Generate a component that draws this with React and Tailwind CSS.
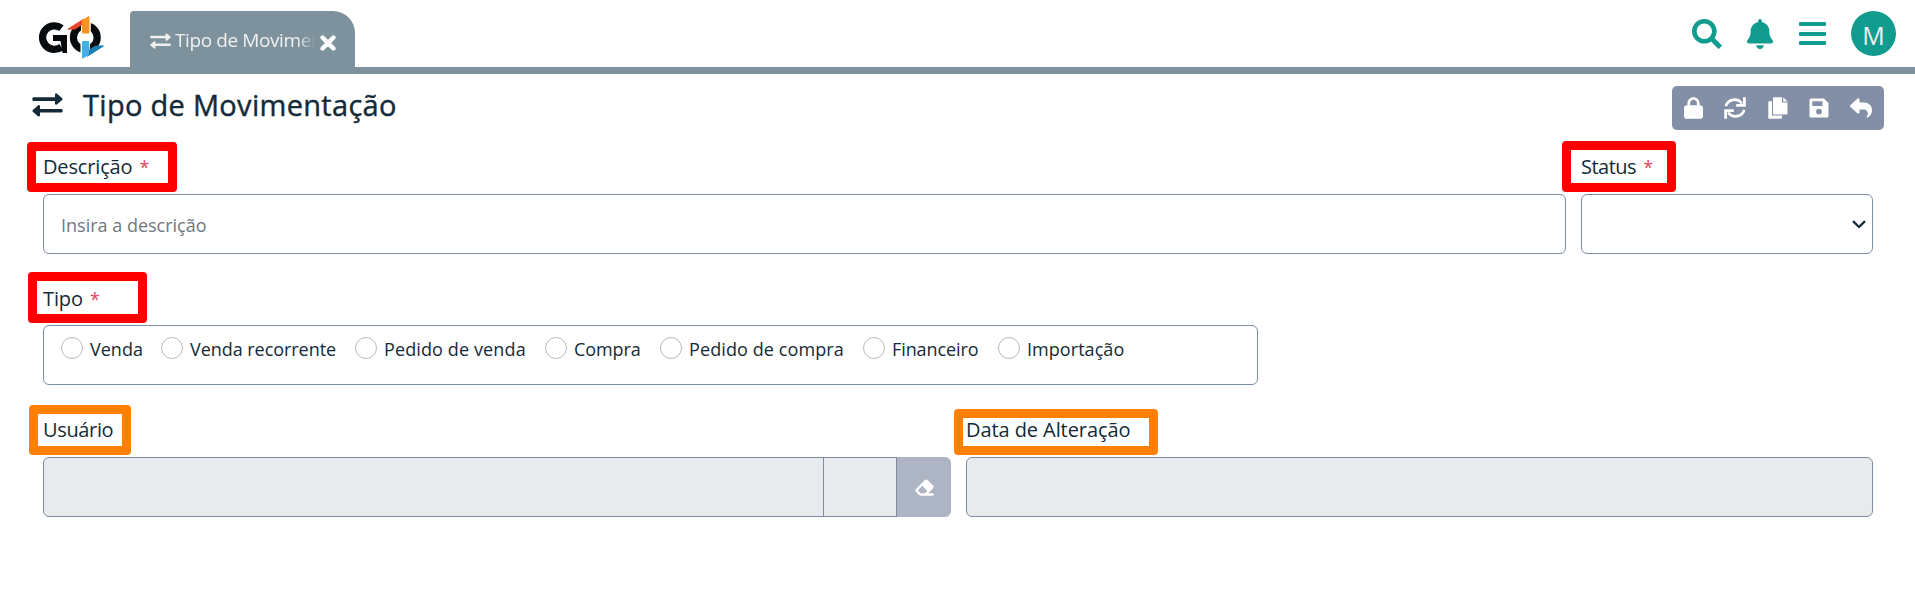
import { FaBell, FaLock, FaReply, FaEraser, FaXmark } from "react-icons/fa6";

function Exchange({ className }) {
  return (
    <svg viewBox="0 0 31 24" preserveAspectRatio="none" className={className} fill="currentColor">
      <path d="M1.500 4.300H23V1.500Q23.300 -.2 24.800 .6L30.200 5.200Q30.900 6.100 30.200 7L24.800 11.600Q23.200 12.400 23 10.700V8H1.500Q.3 8 .3 6.100T1.500 4.300Z" />
      <path d="M29.500 19.600H8V22.500Q7.700 24.100 6.200 23.400L.8 18.700Q.1 17.800 .8 16.900L6.200 12.300Q7.800 11.600 8 13.200V15.900H29.500Q30.700 15.900 30.700 17.800T29.500 19.600Z" />
    </svg>
  );
}

function Logo() {
  return (
    <svg viewBox="0 0 68 43" className="h-[43px] w-[68px]">
      <path d="M24.500 12.200A11.800 11.800 0 1 0 24.500 31" fill="none" stroke="#070b0d" strokeWidth="7.300" />
      <path d="M16 19H30V37H25.500L24.500 31L23.500 25H16Z" fill="#070b0d" />
      <circle cx="48.300" cy="21.500" r="11.900" fill="none" stroke="#070b0d" strokeWidth="7.200" />
      <path d="M44 17.500H53.800V5H44ZM43.500 25H52.800V38H43.500Z" fill="white" />
      <path d="M30.500 13.800L31 12.500L47 2.500L45.500 8.500L38 13.500Z" fill="#e8472b" />
      <path d="M45 4.200L51 .4Q52.500 0 52.500 1.500V16.500L51.500 17.500H46Q45 17.500 45 16.500Z" fill="#f7941e" />
      <path d="M67 29.200L66 30.800L50 41L51.500 34L58 29.800Z" fill="#1b7fb0" />
      <path d="M46 25H51.200Q52 25 52 26V38.500L46.500 42.200Q45 43 45 41V26Z" fill="#3fb1e8" />
    </svg>
  );
}

function Refresh() {
  return (
    <svg viewBox="0 0 22 22" className="size-[22px]" fill="none" stroke="currentColor" strokeWidth="2.800">
      <path d="M1.800 9.200A9 9 0 0 1 17.800 6.500" />
      <path d="M20.400 .3V8.300H12.200" />
      <path d="M20.200 12.800A9 9 0 0 1 4.200 15.500" />
      <path d="M1.600 21.700V13.700H9.800" />
    </svg>
  );
}

function Copy() {
  return (
    <svg viewBox="0 0 20 22" className="h-[22px] w-5" fill="currentColor">
      <path d="M6 .3H14V5.500H19.500V16.500Q19.500 17.500 18.500 17.500H6Q5 17.500 5 16.500V1.300Q5 .3 6 .3Z" />
      <path d="M15.200 .3L19.500 4.500H15.200Z" />
      <path d="M1.300 4.300H4V18.500H14V20.500Q14 21.700 13 21.700H1.300Q.3 21.700 .3 20.700V5.300Q.3 4.300 1.300 4.300Z" />
    </svg>
  );
}

function Save() {
  return (
    <svg viewBox="0 0 20 20" className="size-5" fill="currentColor">
      <path fillRule="evenodd" d="M2 .5H15L19.500 5V18Q19.500 19.500 18 19.500H2Q.5 19.500 .5 18V2Q.5 .5 2 .5ZM3.300 3.300V8H13.500V3.300ZM10 10.700A2.900 2.900 0 1 0 10 16.500A2.900 2.900 0 1 0 10 10.700Z" />
    </svg>
  );
}

function Mark({ className }) {
  return <div className={`absolute rounded-[4px] border-[9px] ${className}`} />;
}

const options = [
  ["Venda", "w-[100px]", "tracking-[0px]"],
  ["Venda recorrente", "w-[194px]", "tracking-[-0.05px]"],
  ["Pedido de venda", "w-[190px]", "tracking-[0.12px]"],
  ["Compra", "w-[115px]", "tracking-[-0.1px]"],
  ["Pedido de compra", "w-[203px]", "tracking-[0.1px]"],
  ["Financeiro", "w-[135px]", "tracking-[-0.1px]"],
  ["Importação", "w-[140px]", "tracking-[0.05px]"],
];

function Label({ children, required, className = "", tracking }) {
  return (
    <div className={`h-7 whitespace-nowrap pt-px text-[20px] leading-7 ${tracking} ${className}`}>
      {children}
      {required && <span className="ml-[7px] text-[18px] text-[#e5455f]">*</span>}
    </div>
  );
}

export default function App() {
  return (
    <div className="relative h-[591px] w-[1915px] overflow-hidden bg-white font-['Open_Sans',sans-serif] text-[#142a38]">
      <header className="flex h-[74px] border-b-[7px] border-[#7d929c] pl-[37px] pr-[19px]">
        <div className="w-[93px] pt-4"><Logo /></div>
        <div className="mt-[11px] flex h-14 w-[225px] items-center rounded-tl-[4px] rounded-tr-[22px] bg-[#7d929c] pl-5 text-[#f0f0f0]">
          <Exchange className="mt-1 h-4 w-[21px] shrink-0" />
          <span className="ml-1 mt-[3px] w-[144px] overflow-hidden whitespace-nowrap text-[19px] tracking-[-0.4px] [mask-image:linear-gradient(to_right,black_85%,transparent_98%)]">Tipo de Movimentação</span>
          <FaXmark className="-ml-[2px] mt-2 size-[22px] shrink-0 stroke-white stroke-[40] text-white" />
        </div>
        <div className="ml-auto flex text-[#129c90]">
          <svg viewBox="0 0 30 30" className="mt-[19px] size-[30px]" fill="none" stroke="currentColor">
            <circle cx="12.300" cy="12.300" r="10" strokeWidth="4.600" />
            <path d="M19.500 19.500L28.300 28.300" strokeWidth="5" />
          </svg>
          <FaBell className="ml-[23px] mt-[19px] h-[30px] w-[30px]" />
          <div className="ml-[24px] mt-[22px] flex h-[23px] w-[27px] flex-col justify-between">
            <span className="h-1 rounded-[1px] bg-[#129c90]" />
            <span className="h-1 rounded-[1px] bg-[#129c90]" />
            <span className="h-1 rounded-[1px] bg-[#129c90]" />
          </div>
          <div className="ml-[25px] mt-[11px] grid size-[45px] place-items-center rounded-full bg-[#129c90] pt-[3px] text-[25px] leading-none text-[#f0f0f0]">M</div>
        </div>
      </header>

      <div className="flex h-[78px] items-start pl-8 pr-[31px]">
        <Exchange className="mt-[19px] h-6 w-[31px]" />
        <h1 className="ml-5 mt-[11px] whitespace-nowrap text-[29px] font-medium leading-10 tracking-[0.3px] [-webkit-text-stroke:0.4px_#142a38]">Tipo de Movimentação</h1>
        <div className="ml-auto mt-3 flex h-11 w-[212px] items-center justify-between rounded-[5px] bg-[#838fa6] px-3 text-white">
          <FaLock className="h-[22px] w-[19px]" />
          <Refresh />
          <Copy />
          <Save />
          <FaReply className="size-[22px]" />
        </div>
      </div>

      <main className="pl-[43px] pr-[42px]">
        <div className="flex gap-[15px]">
          <div className="w-[1523px]">
            <Label required tracking="tracking-[-0.15px]">Descrição</Label>
            <div className="mt-[14px] flex h-[60px] items-center rounded-[6px] border border-[#7f8ca6] pl-[17px] pt-[2px] text-[18px] text-[#6f7780]">Insira a descrição</div>
          </div>
          <div className="w-[292px]">
            <Label required tracking="tracking-[-0.5px]">Status</Label>
            <div className="mt-[14px] flex h-[60px] items-center justify-end rounded-[6px] border border-[#7f8ca6] pr-[6px]">
              <svg viewBox="0 0 14 9" className="h-[9px] w-[14px]" fill="none" stroke="#142a38" strokeWidth="2.300"><path d="M1 1.200L7 7L13 1.200" /></svg>
            </div>
          </div>
        </div>

        <Label required className="mt-[30px]" tracking="tracking-[-0.1px]">Tipo</Label>
        <div className="mt-[13px] flex h-[60px] w-[1215px] rounded-[6px] border border-[#7f8ca6] pl-[17px] pt-[11px]">
          {options.map(([name, width, tracking]) => (
            <div key={name} className={`flex h-[22px] shrink-0 items-center gap-[7px] whitespace-nowrap text-[18px] ${width}`}>
              <span className="size-[22px] shrink-0 rounded-full border border-[#b5bcc0]" />
              <span className={`mt-[3px] ${tracking}`}>{name}</span>
            </div>
          ))}
        </div>

        <div className="mt-[30px] flex gap-[15px]">
          <div className="w-[908px]">
            <Label tracking="tracking-[-0.35px]">Usuário</Label>
            <div className="mt-[14px] flex h-[60px]">
              <div className="w-[781px] rounded-l-[6px] border border-[#7f8ca0] bg-[#e7ebee]" />
              <div className="-ml-px w-[74px] border border-[#7f8ca0] bg-[#e7ebee]" />
              <div className="grid w-[54px] place-items-center rounded-r-[6px] bg-[#adb4c3] text-white"><FaEraser className="size-[21px]" /></div>
            </div>
          </div>
          <div className="w-[907px]">
            <Label tracking="tracking-[-0.08px]">Data de Alteração</Label>
            <div className="mt-[14px] h-[60px] rounded-[6px] border border-[#7f8ca0] bg-[#e7ebee]" />
          </div>
        </div>
      </main>

      <Mark className="left-[27px] top-[142px] h-[50px] w-[150px] border-[#ff0000]" />
      <Mark className="left-[1562px] top-[141px] h-[51px] w-[114px] border-[#ff0000]" />
      <Mark className="left-[28px] top-[272px] h-[51px] w-[119px] border-[#ff0000]" />
      <Mark className="left-[29px] top-[405px] h-[50px] w-[102px] border-[#ff8000]" />
      <Mark className="left-[954px] top-[409px] h-[46px] w-[204px] border-[#ff8000]" />
    </div>
  );
}
